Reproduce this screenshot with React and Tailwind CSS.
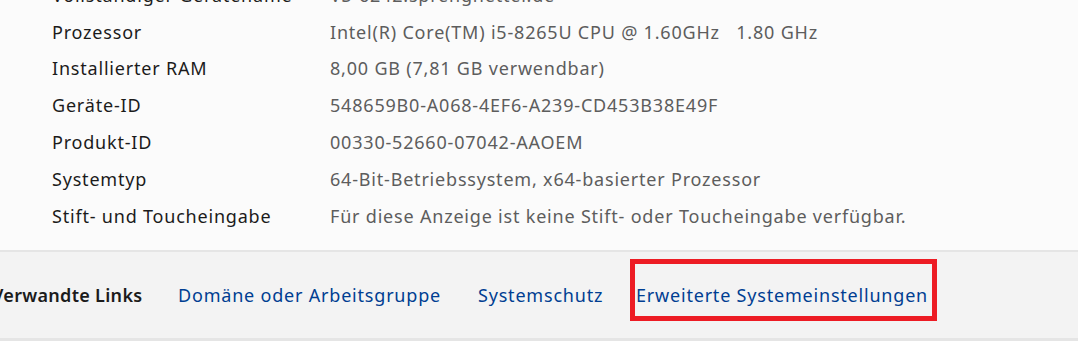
import React from 'react';

const specs = [
  ['Vollständiger Gerätename', 'VS-6242.sprengnetter.de'],
  ['Prozessor', 'Intel(R) Core(TM) i5-8265U CPU @ 1.60GHz   1.80 GHz'],
  ['Installierter RAM', '8,00 GB (7,81 GB verwendbar)'],
  ['Geräte-ID', '548659B0-A068-4EF6-A239-CD453B38E49F'],
  ['Produkt-ID', '00330-52660-07042-AAOEM'],
  ['Systemtyp', '64-Bit-Betriebssystem, x64-basierter Prozessor'],
  ['Stift- und Toucheingabe', 'Für diese Anzeige ist keine Stift- oder Toucheingabe verfügbar.'],
];

function App() {
  return (
    <div
      className="w-[1078px] h-[341px] overflow-hidden bg-[#fbfbfb] flex flex-col text-[18px] tracking-[0.8px]"
      style={{ fontFamily: '"Noto Sans", "Open Sans", sans-serif' }}
    >
      <div className="h-[250px] overflow-hidden">
        <ul className="mt-[-23px] pl-[52px]">
          {specs.map(([label, value]) => (
            <li key={label} className="flex items-center h-[36.8px]">
              <span className="w-[278px] text-[#1b1b1b]">{label}</span>
              <span className="text-[#5d5d5d] whitespace-pre">{value}</span>
            </li>
          ))}
        </ul>
      </div>

      {/* Verwandte Links */}
      <div className="flex-1 bg-[#f3f3f3] border-t-2 border-b-[3px] border-[#e5e5e5] flex items-center leading-[24px]">
        <span className="ml-[-8px] w-[186px] shrink-0 font-semibold text-[#1b1b1b] tracking-[0.3px] whitespace-nowrap">
          Verwandte Links
        </span>
        <a href="#" className="w-[300px] shrink-0 text-[#003e92] whitespace-nowrap">
          Domäne oder Arbeitsgruppe
        </a>
        <a href="#" className="w-[158px] shrink-0 text-[#003e92] whitespace-nowrap">
          Systemschutz
        </a>
        <a href="#" className="relative text-[#003e92] whitespace-nowrap">
          Erweiterte Systemeinstellungen
          <span className="absolute left-[-6px] top-[-24px] w-[307px] h-[62px] border-[5px] border-[#ed1c24]" />
        </a>
      </div>
    </div>
  );
}

export default App;
